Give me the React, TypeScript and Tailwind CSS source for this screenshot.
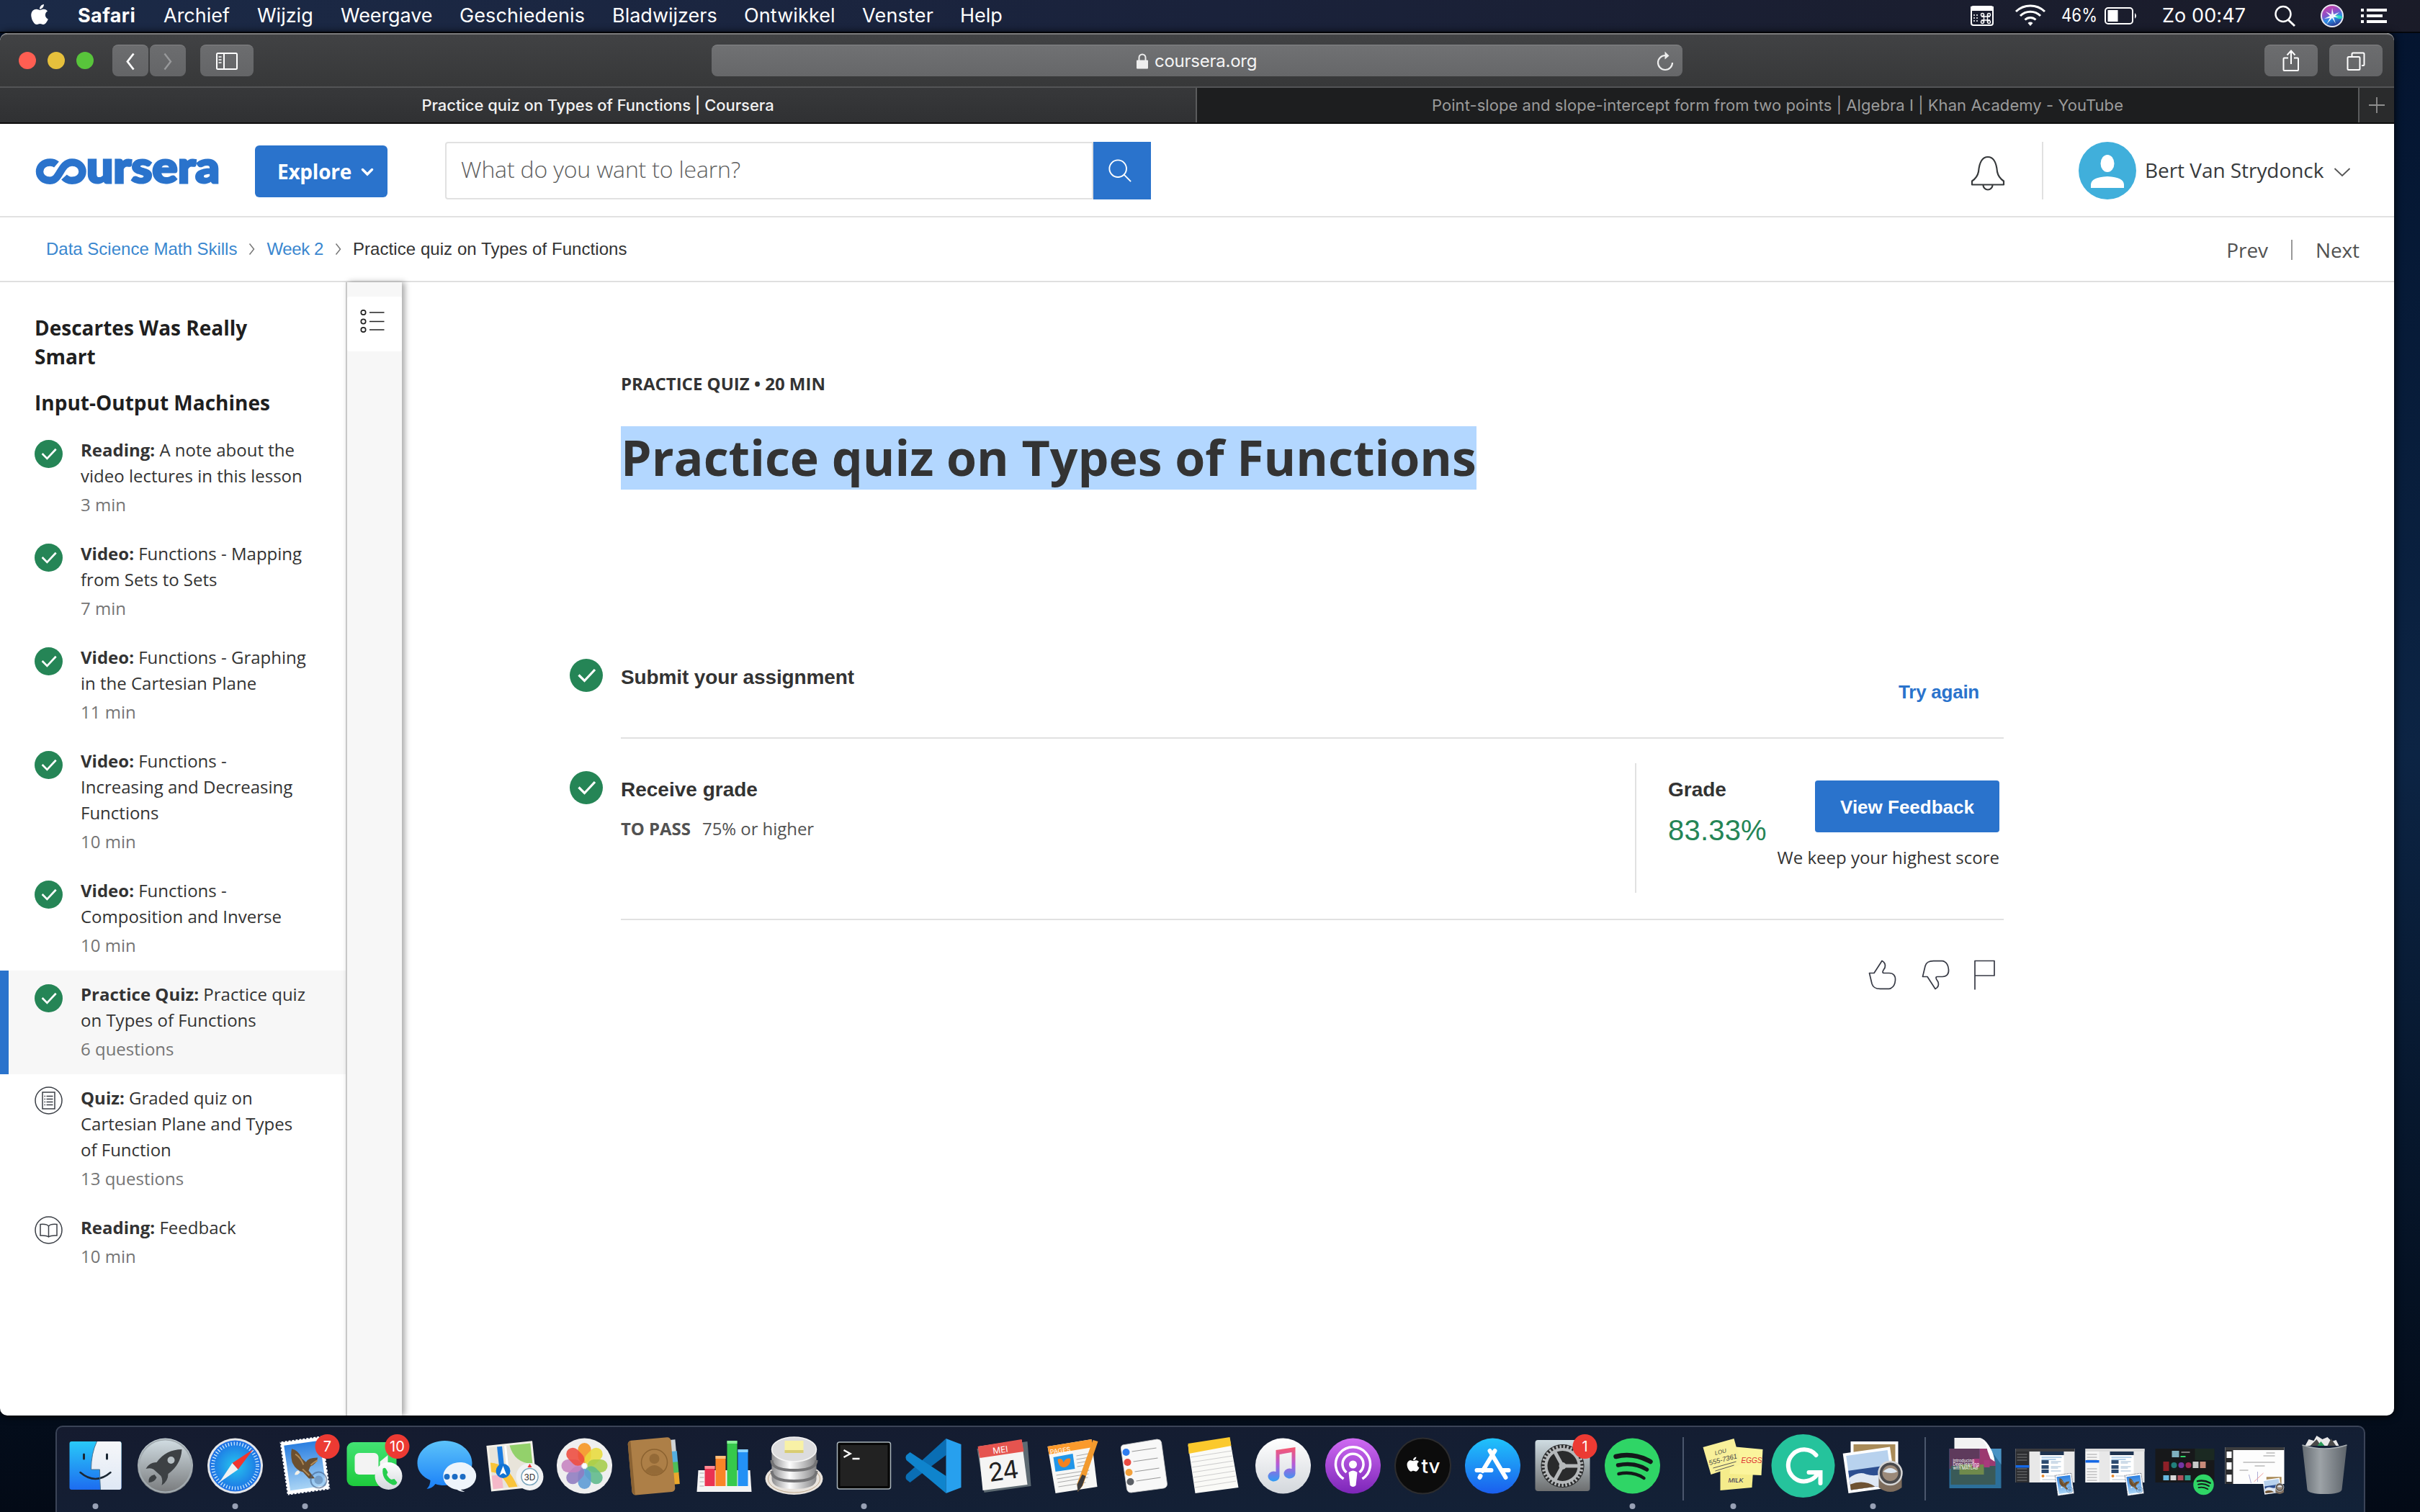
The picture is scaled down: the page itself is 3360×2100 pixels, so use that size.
import { type ReactNode } from "react";
import { FaApple } from "react-icons/fa";

const sans = "font-['Open_Sans',sans-serif]";
const inter = "font-['Inter',sans-serif]";
const helv = "font-['Liberation_Sans',sans-serif]";

const menus: [string, string][] = [
  ["Safari", "w-[119px] font-bold tracking-[0.4px]"],
  ["Archief", "w-[130px]"],
  ["Wijzig", "w-[116px]"],
  ["Weergave", "w-[165px] tracking-[-0.1px]"],
  ["Geschiedenis", "w-[212px] tracking-[0.1px]"],
  ["Bladwijzers", "w-[183px]"],
  ["Ontwikkel", "w-[164px] tracking-[0.1px]"],
  ["Venster", "w-[136px] tracking-[0.2px]"],
  ["Help", "w-[80px]"],
];

function MenuBar() {
  return (
    <div className={`flex h-[46px] w-full items-center border-b-2 border-[#03060c] bg-linear-to-r from-[#1b2a47] via-[#1a223b] to-[#1a1b28] text-[27px] leading-[44px] whitespace-nowrap text-white ${inter}`}>
      <FaApple className="mr-[37px] mb-1 ml-[39px] size-[32px]" />
      {menus.map(([label, cls]) => (
        <div key={label} className={cls}>{label}</div>
      ))}
      <div className="flex-1" />
      <svg className="h-[44px] w-[240px]" viewBox="0 0 240 44">
        <g fill="none" stroke="#fff" strokeWidth="2">
          <rect x="6" y="9" width="30" height="26" rx="3" />
          <path d="M6 10h30v4H6z" fill="#fff" />
          <path d="M9 21h6M9 25h6M9 29h6" strokeDasharray="2 2" strokeWidth="1.600" />
          <path d="M23.500 20v11M28.500 20v11M20 23h12M20 28h12" strokeWidth="1.400" />
          <circle cx="21.500" cy="20.500" r="2" strokeWidth="1.400" /><circle cx="30.500" cy="20.500" r="2" strokeWidth="1.400" />
          <circle cx="21.500" cy="30.500" r="2" strokeWidth="1.400" /><circle cx="30.500" cy="30.500" r="2" strokeWidth="1.400" />
        </g>
        <g fill="none" stroke="#fff" strokeWidth="3">
          <path d="M68 16a29 29 0 0 1 40 0" /><path d="M74 22a20 20 0 0 1 28 0" /><path d="M80.500 27.500a11 11 0 0 1 15 0" />
        </g>
        <path d="M84.500 32a5 5 0 0 1 7 0l-3.500 4z" fill="#fff" />
        <text x="131" y="30" fontSize="25" fill="#fff" textLength="50" lengthAdjust="spacingAndGlyphs">46%</text>
        <rect x="192" y="11" width="38" height="22" rx="4" fill="none" stroke="#fff" strokeWidth="2" />
        <rect x="195.500" y="14" width="14" height="16" fill="#fff" />
        <path d="M233 18q4 4 0 8z" fill="#fff" />
      </svg>
      <div className="ml-[31px] w-[154px] tracking-[0.1px]">Zo 00:47</div>
      <svg className="mr-[44px] h-[44px] w-[160px]" viewBox="3156 0 160 44">
        <circle cx="3170" cy="19.500" r="10.500" fill="none" stroke="#fff" strokeWidth="2.400" />
        <path d="M3177 27.500l9 8.500" stroke="#fff" strokeWidth="3" />
        <defs>
          <linearGradient id="siri" x1="0.200" y1="0" x2="0.600" y2="1"><stop offset="0" stopColor="#d83fa4" /><stop offset="0.400" stopColor="#8a4fc8" /><stop offset="0.650" stopColor="#2a8fe8" /><stop offset="1" stopColor="#27308a" /></linearGradient>
        </defs>
        <circle cx="3238" cy="22" r="15" fill="url(#siri)" stroke="#e9e9f2" strokeWidth="2" />
        <path d="M3240 21q8-1 13 3q-4 5-12-1z" fill="#2ee6c0" opacity=".85" />
        <path d="M3238 11l2 9l8-3l-6 5l5 2l-7 0l3 9l-5-8l-8 9l5-9l-8 1l8-4l-6-6l8 4z" fill="#fff" opacity=".92" />
        <path d="M3278 12h4v4h-4zM3278 20h4v4h-4zM3278 28h4v4h-4zM3286 12h28v4h-28zM3286 20h22v4h-22zM3286 28h28v4h-28z" fill="#fff" />
      </svg>
    </div>
  );
}

const btn = "flex h-[44px] items-center justify-center rounded-[8px] border-t border-[#838385] bg-linear-to-b from-[#6c6d6f] to-[#646567]";

function Toolbar() {
  return (
    <div className="flex h-[76px] items-center rounded-t-[10px] border-t-2 border-b-2 border-t-[#7b7b7c] border-b-[#535456] bg-linear-to-b from-[#414244] to-[#373839]">
      <div className="ml-[26px] flex gap-4">
        <span className="size-[24px] rounded-full bg-[#ff5e52]" />
        <span className="size-[24px] rounded-full bg-[#e6c03c]" />
        <span className="size-[24px] rounded-full bg-[#58c43b]" />
      </div>
      <div className={`ml-[26px] w-[50px] ${btn}`}>
        <svg className="size-[30px]" viewBox="0 0 30 30"><path d="M19.500 4.500L11 15.500L19.500 26.500" fill="none" stroke="#fff" strokeWidth="2.800" /></svg>
      </div>
      <div className={`ml-[2px] w-[50px] ${btn}`}>
        <svg className="size-[30px]" viewBox="0 0 30 30"><path d="M10.500 4.500L19 15.500L10.500 26.500" fill="none" stroke="#98999b" strokeWidth="2.400" /></svg>
      </div>
      <div className={`ml-[20px] w-[74px] ${btn}`}>
        <svg className="h-[26px] w-[32px]" viewBox="0 0 32 26"><g fill="none" stroke="#fff" strokeWidth="2"><rect x="2" y="2" width="28" height="22" rx="1.500" /><path d="M12 2v22" /><path d="M4.500 7h4M4.500 11h4M4.500 15h4" strokeWidth="1.600" /></g></svg>
      </div>
      <div className="ml-[636px] flex h-[44px] w-[1348px] items-center rounded-[8px] border-t border-[#868789] bg-linear-to-b from-[#707173] to-[#666769]">
        <svg className="ml-[590px] h-[22px] w-[17px]" viewBox="0 0 17 22"><rect x="0" y="9.500" width="16" height="12" rx="1" fill="#eee" /><path d="M3.500 10V6a4.500 4.500 0 0 1 9 0v4" fill="none" stroke="#eee" strokeWidth="2" /></svg>
        <div className={`ml-[8px] w-[696px] text-[24px] leading-[40px] tracking-[-0.25px] text-[#f4f4f4] ${inter}`}>coursera.org</div>
        <svg className="h-[30px] w-[26px]" viewBox="0 0 26 30"><path d="M13 7a10 10 0 1 0 10 10" fill="none" stroke="#eee" strokeWidth="2.200" /><path d="M12.500 1.500l6 6l-6 5z" fill="#eee" /></svg>
      </div>
      <div className={`ml-[808px] w-[74px] ${btn}`}>
        <svg className="h-[34px] w-[26px]" viewBox="0 0 26 34"><g fill="none" stroke="#fff" strokeWidth="2"><path d="M9 12.500H3.500q-1 0-1 1V29q0 1 1 1H22q1 0 1-1V13.500q0-1-1-1H17" /><path d="M13 21V3M7.500 8.500L13 2.500l5.500 6" /></g></svg>
      </div>
      <div className={`ml-[16px] w-[74px] ${btn}`}>
        <svg className="h-[28px] w-[26px]" viewBox="0 0 26 28"><g fill="none" stroke="#fff" strokeWidth="2"><rect x="1.500" y="8" width="17" height="18" rx="1.500" /><path d="M7.500 7V4q0-1.500 1.500-1.500H23q1.500 0 1.500 1.500V18.500q0 1.500-1.500 1.500h-2" /></g></svg>
      </div>
    </div>
  );
}

function TabBar() {
  return (
    <div className={`flex h-[50px] border-b-2 border-[#0c0c0c] text-[22px] leading-[48px] whitespace-nowrap ${inter}`}>
      <div className="flex w-[1662px] justify-center border-r-2 border-[#5a5b5c] bg-linear-to-b from-[#37383a] to-[#303133] font-medium tracking-[-0.05px] text-[#f2f2f2]">Practice quiz on Types of Functions | Coursera</div>
      <div className="flex w-[1614px] justify-center border-r-2 border-[#5a5b5c] bg-[#1d1e1f] tracking-[0.06px] text-[#9b9b9b]">Point-slope and slope-intercept form from two points | Algebra I | Khan Academy - YouTube</div>
      <div className="flex w-[48px] items-center justify-center bg-[#2a2b2c]">
        <svg className="size-[24px]" viewBox="0 0 24 24"><path d="M12 1v22M1 12h22" stroke="#8f8f8f" strokeWidth="1.800" /></svg>
      </div>
    </div>
  );
}

function Logo() {
  return (
    <svg aria-label="coursera" className="mt-[2px] ml-[46px] h-[100px] w-[262px]" viewBox="46 186 262 100">
      <path d="M78.500 227.500Q75 224.500 69.500 224.500C61 224.500 55 230 55 237.300S61 249.800 69.500 249.800C84 249.800 83.500 224.500 100 224.500C108.500 224.500 114.500 230 114.500 237.300S108.500 249.800 100 249.800Q93.500 249.800 89 245" fill="none" stroke="#2a73cc" strokeWidth="10.500" />
      <text x="120" y="252.500" textLength="185" lengthAdjust="spacingAndGlyphs" fontFamily="Lato" fontWeight="900" fontSize="60" fill="#2a73cc" stroke="#2a73cc" strokeWidth="3">ursera</text>
    </svg>
  );
}

function SiteHeader() {
  return (
    <div className="flex h-[130px] items-center border-b-2 border-[#e1e1e1]">
      <Logo />
      <div className={`mt-[4px] ml-[46px] flex h-[72px] w-[184px] items-center rounded-[6px] bg-[#2a73cc] pl-[31px] text-[28px] font-bold tracking-[-0.25px] text-white ${sans}`}>
        Explore
        <svg className="mt-[2px] ml-[13px] h-[12px] w-[18px]" viewBox="0 0 18 12"><path d="M2.500 2.500L9 9l6.500-6.500" fill="none" stroke="#fff" strokeWidth="3.400" strokeLinecap="round" /></svg>
      </div>
      <div className={`mt-[2px] ml-[80px] flex h-[80px] w-[900px] items-center rounded-l-[4px] border-2 border-[#e1e1e1] pb-[4px] pl-[20px] text-[32px] font-light tracking-[-0.17px] text-[#5e5e5e] ${sans}`}>
        What do you want to learn?
      </div>
      <div className="mt-[2px] flex h-[80px] w-[80px] items-center justify-center bg-[#2a73cc] pr-[6px]">
        <svg className="size-[34px]" viewBox="0 0 36 36"><circle cx="15" cy="15" r="12.500" fill="none" stroke="#fff" strokeWidth="2" /><path d="M24 24l10 10" stroke="#fff" strokeWidth="2" /></svg>
      </div>
      <svg className="mt-[10px] ml-[1138px] h-[52px] w-[48px]" viewBox="0 0 48 52">
        <g fill="none" stroke="#373a3c" strokeWidth="2.200"><path d="M2 41.500h44v-5c-6-4-8-8-9-13C36 12 32 3 24 3S12 12 11 23.500c-1 5-3 9-9 13z" strokeLinejoin="round" /><path d="M17.500 42a6.500 6.500 0 0 0 13 0" /></g>
      </svg>
      <div className="mt-[2px] ml-[51px] h-[80px] w-[2px] bg-[#e1e1e1]" />
      <svg className="mt-[2px] ml-[49px] size-[80px]" viewBox="0 0 80 80"><circle cx="40" cy="40" r="40" fill="#40afdb" /><ellipse cx="40" cy="30" rx="9.500" ry="12" fill="#fff" /><path d="M17 64v-4c0-7 6-11 23-12c17 1 23 5 23 12v4z" fill="#fff" /></svg>
      <div className={`ml-[12px] w-[262px] text-[28px] tracking-[-0.05px] text-[#373a3c] ${sans}`}>Bert Van Strydonck</div>
      <svg className="mt-[6px] h-[14px] w-[24px]" viewBox="0 0 24 14"><path d="M1.500 2L12 12L22.500 2" fill="none" stroke="#555" strokeWidth="1.800" /></svg>
    </div>
  );
}

function Sep() {
  return <svg className="mx-[16px] h-[18px] w-[9px] shrink-0" viewBox="0 0 9 18"><path d="M1.500 1.500L7.500 9L1.500 16.500" fill="none" stroke="#777" strokeWidth="1.500" /></svg>;
}

function Crumbs() {
  return (
    <div className={`flex h-[90px] items-center border-b-2 border-[#dfdfdf] pl-[64px] text-[24px] whitespace-nowrap text-[#3a87cf] ${helv}`}>
      <span>Data Science Math Skills</span>
      <Sep />
      <span className="tracking-[-0.4px]">Week 2</span>
      <Sep />
      <span className="tracking-[0.06px] text-[#333]">Practice quiz on Types of Functions</span>
      <div className={`ml-auto flex items-center pt-[2px] pr-[48px] text-[28px] tracking-[-0.1px] text-[#525252] ${sans}`}>
        <span>Prev</span>
        <span className="mx-[32px] h-[28px] w-[2px] bg-[#999]" />
        <span>Next</span>
      </div>
    </div>
  );
}

function Check({ className }: { className: string }) {
  return (
    <svg className={className} viewBox="0 0 46 46"><circle cx="23" cy="23" r="23" fill="#258556" /><path d="M12.500 22.500L20.500 30.500L35 15" fill="none" stroke="#fff" strokeWidth="3.200" /></svg>
  );
}

function QuizIcon() {
  return (
    <svg className="mt-[-2px] size-[39px]" viewBox="0 0 39 39"><g fill="none" stroke="#3b3f46" strokeWidth="1.500"><circle cx="19.500" cy="19.500" r="18.500" /><rect x="11" y="8" width="17" height="23" /><path d="M16.500 13.500h9M16.500 17.500h9M16.500 21.500h9M16.500 25.500h9M13.500 13.500h1.500M13.500 17.500h1.500M13.500 21.500h1.500M13.500 25.500h1.500" /></g></svg>
  );
}

function BookIcon() {
  return (
    <svg className="mt-[-2px] size-[39px]" viewBox="0 0 39 39"><g fill="none" stroke="#3b3f46" strokeWidth="1.500"><circle cx="19.500" cy="19.500" r="18.500" /><path d="M19.500 14c-2-2.500-6-3-11.500-2.500v15.500c5-.300 9 0 11.500 2c2.500-2 6.500-2.300 11.500-2V11.500c-5.500-.500-9.500 0-11.500 2.500zv15" /></g></svg>
  );
}

const lessons: { kind: string; lines: string[]; meta: string; icon?: "quiz" | "book"; active?: boolean }[] = [
  { kind: "Reading:", lines: ["A note about the", "video lectures in this lesson"], meta: "3 min" },
  { kind: "Video:", lines: ["Functions - Mapping", "from Sets to Sets"], meta: "7 min" },
  { kind: "Video:", lines: ["Functions - Graphing", "in the Cartesian Plane"], meta: "11 min" },
  { kind: "Video:", lines: ["Functions -", "Increasing and Decreasing", "Functions"], meta: "10 min" },
  { kind: "Video:", lines: ["Functions -", "Composition and Inverse"], meta: "10 min" },
  { kind: "Practice Quiz:", lines: ["Practice quiz", "on Types of Functions"], meta: "6 questions", active: true },
  { kind: "Quiz:", lines: ["Graded quiz on", "Cartesian Plane and Types", "of Function"], meta: "13 questions", icon: "quiz" },
  { kind: "Reading:", lines: ["Feedback"], meta: "10 min", icon: "book" },
];

function Sidebar() {
  return (
    <div className={`w-[480px] ${sans}`}>
      <h2 className="mt-[43px] ml-[48px] text-[28px] leading-[40px] font-bold text-[#1f1f1f]">Descartes Was Really<br />Smart</h2>
      <h2 className="mt-[24px] mb-[13px] ml-[48px] text-[28px] leading-[40px] font-bold text-[#1f1f1f]">Input-Output Machines</h2>
      {lessons.map((l, i) => (
        <div key={i} className={`flex border-l-12 pt-[15px] pb-[17px] pl-[36px] text-[24px] leading-[36px] text-[#333] ${l.active ? "border-[#2a73cc] bg-[#f7f7f7]" : "border-transparent"}`}>
          <div className="w-[64px] shrink-0 pt-[4px]">
            {l.icon === "quiz" ? <QuizIcon /> : l.icon === "book" ? <BookIcon /> : <Check className="size-[39px]" />}
          </div>
          <div className="whitespace-nowrap">
            <div><b>{l.kind}</b> {l.lines[0]}</div>
            {l.lines.slice(1).map((x) => <div key={x}>{x}</div>)}
            <div className="mt-[4px] text-[#757575]">{l.meta}</div>
          </div>
        </div>
      ))}
    </div>
  );
}

function Rail() {
  return (
    <div className="w-[78px] border-l-2 border-[#c8c8c8] bg-[#f7f7f7] pt-[20px] shadow-[4px_0_8px_rgba(0,0,0,0.35)]">
      <div className="flex h-[76px] w-[76px] items-center rounded-[3px] bg-white pl-[18px]">
        <svg className="mb-[8px] h-[32px] w-[34px]" viewBox="0 0 34 32"><g fill="none" stroke="#222" strokeWidth="1.700"><circle cx="4.500" cy="4" r="3.200" /><circle cx="4.500" cy="16.500" r="3.200" /><circle cx="4.500" cy="28" r="3.200" /><path d="M13 4h20.500M13 16.500h20.500M13 28h20.500" /></g></svg>
      </div>
    </div>
  );
}

function Content() {
  return (
    <div className="flex-1 pl-[233px] whitespace-nowrap text-[#333]">
      <div className={`mt-[123px] pl-[71px] text-[24px] leading-[36px] font-bold ${sans}`}>PRACTICE QUIZ • 20 MIN</div>
      <h1 className={`mt-[41px] ml-[71px] h-[88px] w-[1188px] bg-[#b3d7ff] text-[68px] leading-[86px] font-bold ${sans}`}>Practice quiz on Types of Functions</h1>
      <div className={`mt-[235px] flex h-[111px] ${helv}`}>
        <Check className="size-[46px]" />
        <div className="ml-[25px] flex flex-1 justify-between border-b-2 border-[#e1e1e1]">
          <div className="pt-[8px] text-[28px] leading-[36px] font-bold tracking-[-0.13px]">Submit your assignment</div>
          <div className="mr-[34px] pt-[28px] text-[26px] leading-[36px] font-bold tracking-[-0.25px] text-[#2a73cc]">Try again</div>
        </div>
        <div className="w-[542px]" />
      </div>
      <div className="flex h-[252px]">
        <Check className="mt-[45px] size-[46px]" />
        <div className="ml-[25px] flex flex-1 border-b-2 border-[#e1e1e1]">
          <div className="w-[1408px]">
            <div className={`mt-[53px] text-[28px] leading-[36px] font-bold ${helv}`}>Receive grade</div>
            <div className={`mt-[18px] flex gap-[16px] text-[24px] leading-[36px] tracking-[-0.05px] text-[#525252] ${sans}`}><b>TO PASS</b><span>75% or higher</span></div>
          </div>
          <div className="mt-[34px] h-[180px] w-[2px] bg-[#e1e1e1]" />
          <div className={`mt-[53px] ml-[44px] w-[120px] ${helv}`}>
            <div className="text-[28px] leading-[36px] font-bold">Grade</div>
            <div className="mt-[16px] text-[40px] leading-[44px] tracking-[0.2px] text-[#258556]">83.33%</div>
          </div>
          <div className="mr-[6px] ml-auto flex flex-col items-end pt-[58px]">
            <div className={`flex h-[72px] w-[256px] items-center justify-center rounded-[4px] bg-[#2a73cc] pt-[2px] text-[26px] font-bold text-white ${helv}`}>View Feedback</div>
            <div className={`mt-[17px] text-[24px] leading-[36px] ${sans}`}>We keep your highest score</div>
          </div>
        </div>
        <div className="w-[542px]" />
      </div>
      <svg className="mt-[52px] ml-[1798px] h-[48px] w-[190px]" viewBox="2590 1330 190 48">
        <g fill="none" stroke="#373a45" strokeWidth="1.700" strokeLinejoin="round">
          <path d="M2596.500 1351.500h6.500l11-17c4 2 5 6 4 9.500c-1 2-3 4-3 6q0 1.500 2 1.500h7c6 0 9 4 8.500 10c-.500 6-3 9.500-6 11q-1 .800-3 .800h-12c-7 0-10-2-11.500-7z" />
          <path d="M2670.500 1356.500h6.500l11 17c4-2 5-6 4-9.500c-1-2-3-4-3-6q0-1.500 2-1.500h7c6 0 9-4 8.500-10c-.500-6-3-9.500-6-11q-1-.800-3-.800h-12c-7 0-10 2-11.500 7z" />
          <path d="M2743 1374.500v-40h27v20.500h-27" />
        </g>
      </svg>
    </div>
  );
}

function Icon({ children, dot }: { children: ReactNode; dot?: boolean }) {
  return (
    <svg className="h-[118px] w-[97px] shrink-0 overflow-visible" viewBox="-48.5 -54 97 118">
      {children}
      {dot && <circle cx="0" cy="56" r="4" fill="#98a1b5" />}
    </svg>
  );
}

function Badge({ n, x }: { n: string; x: number }) {
  return <g><circle cx={x} cy="-27" r="17" fill="#ec3a33" /><text x={x} y="-20" fontSize="20" textAnchor="middle" fill="#fff">{n}</text></g>;
}

function MailStamp() {
  return (
    <g transform="rotate(-8)">
      <rect x="-30" y="-38" width="60" height="75" fill="#fff" />
      <rect x="-30" y="-38" width="60" height="75" fill="none" stroke="#15203a" strokeWidth="2.500" strokeDasharray="2 3" />
      <rect x="-25" y="-32" width="50" height="63" fill="url(#stamp)" />
      <path d="M-15-26q9 3 12 15l5 6q4-6 17-4q-2 8-12 11l-3 5l7 12l-8-1l-7-10q-10-4-13-16q-1-10 2-18z" fill="#6b4f30" />
      <path d="M-11-18q7 6 9 16M8 0q6-4 10-5M-4 4l8 10" stroke="#b08a55" strokeWidth="2" fill="none" />
      <path d="M-8 8q-4 4-8 2q2-5 6-5z" fill="#f4f0e6" />
      <circle cx="16" cy="22" r="11" fill="none" stroke="#42608a" strokeWidth="2" opacity=".6" /><circle cx="16" cy="22" r="6" fill="#42608a" opacity=".4" />
    </g>
  );
}

function SpotifyMark() {
  return (
    <g>
      <circle r="38.500" fill="#2fd566" />
      <g fill="none" stroke="#14181a" strokeLinecap="round"><path d="M-23-13q24-6 48 7" strokeWidth="6.500" /><path d="M-20-1q22-5 40 6" strokeWidth="5.500" /><path d="M-19 11q20-4 35 6" strokeWidth="4.500" /></g>
    </g>
  );
}

function PreviewPhoto() {
  return (
    <g>
      <g transform="translate(2 -14)"><rect x="-33" y="-20" width="66" height="50" fill="#fff" /><rect x="-29" y="-16" width="58" height="44" fill="#a98b58" /></g>
      <g transform="rotate(-8) translate(-6 4)">
        <rect x="-33" y="-27" width="66" height="56" fill="#fff" />
        <rect x="-29" y="-23" width="58" height="48" fill="#b8d2ee" />
        <path d="M-29-2h58v27h-58z" fill="#2d4f90" /><path d="M-29 8q14-8 24-2q16 8 34-2v21h-58z" fill="#dfe8f4" /><path d="M-29 17q20-5 34 8h-34z" fill="#6d5233" />
      </g>
      <path d="M8 12h32v18q-16 12-32 0z" fill="#7d6c5c" />
      <circle cx="24" cy="10" r="16" fill="#4a4a4c" stroke="#d6d6d6" strokeWidth="2.500" /><circle cx="24" cy="10" r="11" fill="#9b8a7a" /><path d="M14 8q10-10 20 0q-8 4-20 0z" fill="#dbe6f0" />
    </g>
  );
}

function MailThumb({ dark }: { dark: boolean }) {
  const side = dark ? "#2c2d30" : "#f6f6f6";
  return (
    <g>
      <rect x="-41" y="-24" width="82" height="47" fill="#e8e8e8" />
      <rect x="-41" y="-24" width="82" height="4" fill={dark ? "#3a3b3e" : "#dcdcdc"} />
      <rect x="-41" y="-20" width="19" height="43" fill={side} />
      <path d="M-39-16h14M-39-12h14M-39-8h14M-39 4h14M-39 8h14M-39 12h14M-39 16h14M-39 20h14" stroke="#8f8f92" strokeWidth=".8" />
      <rect x="-41" y={dark ? -1 : -8} width="19" height="3.500" fill="#1568e6" />
      <rect x="-7" y="-20" width="33" height="42" fill="#fff" /><rect x="-7" y="-20" width="33" height="5" fill="#1e3350" />
      <path d="M-5-12h28M-5-9h20" stroke="#6ea7d8" strokeWidth="1" />
      <path d="M-5-8h10v5h-10zM-5-1h10v5h-10zM-5 5h10v5h-10z" fill="#2d4b70" /><path d="M8-6h14M8-4h10M8 1h14M8 3h10M8 7h14" stroke="#9cb8d2" strokeWidth="1" />
      <circle cx="-3" cy="14" r="2" fill="#e88a2c" /><path d="M1 14h20M-4 19h26" stroke="#b8c4d0" strokeWidth="1" />
      <g transform="translate(27 26) scale(.38)"><MailStamp /></g>
    </g>
  );
}

const petals = ["#f7941e", "#e8dc3c", "#a5cd4a", "#5fb98b", "#5b9bd5", "#8f7cc0", "#c683c0", "#ee4b3e"];

function Dock() {
  return (
    <div className={`mt-[14px] ml-[77px] flex h-[120px] w-[3207px] rounded-t-[10px] border-2 border-b-0 border-[#3b4457] bg-linear-to-br from-[#151b2f] to-[#122238] pl-[5px] ${inter}`}>
      <svg className="absolute size-0">
        <defs>
          <linearGradient id="finder" x2="0" y2="1"><stop stopColor="#29c9f8" /><stop offset="1" stopColor="#1d6cf0" /></linearGradient>
          <linearGradient id="finder2" x2="0" y2="1"><stop stopColor="#f6f7f9" /><stop offset="1" stopColor="#dfe8f5" /></linearGradient>
          <linearGradient id="rocket" x2="0" y2="1"><stop stopColor="#d3dfe5" /><stop offset="1" stopColor="#77797b" /></linearGradient>
          <radialGradient id="safari"><stop stopColor="#26c6ee" /><stop offset="1" stopColor="#1d6fe4" /></radialGradient>
          <linearGradient id="stamp" x2="0" y2="1"><stop stopColor="#2b7fe0" /><stop offset="1" stopColor="#a9d4f5" /></linearGradient>
          <linearGradient id="green" x2="0" y2="1"><stop stopColor="#42e273" /><stop offset="1" stopColor="#1ecb3d" /></linearGradient>
          <linearGradient id="msg" x2="0" y2="1"><stop stopColor="#5cc3fa" /><stop offset="1" stopColor="#1a80f8" /></linearGradient>
          <linearGradient id="silver" x2="0" y2="1"><stop stopColor="#fff" /><stop offset="1" stopColor="#d3d7dc" /></linearGradient>
          <linearGradient id="metal"><stop stopColor="#8d8d8f" /><stop offset=".4" stopColor="#fdfdfd" /><stop offset="1" stopColor="#858587" /></linearGradient>
          <linearGradient id="note" x2="0" y2="1"><stop stopColor="#f9586d" /><stop offset=".5" stopColor="#b55bd8" /><stop offset="1" stopColor="#2f9df4" /></linearGradient>
          <linearGradient id="pod" x2="0" y2="1"><stop stopColor="#cf6bf2" /><stop offset="1" stopColor="#7c25b8" /></linearGradient>
          <linearGradient id="store" x2="0" y2="1"><stop stopColor="#20c3fb" /><stop offset="1" stopColor="#1a5eee" /></linearGradient>
          <linearGradient id="gear" x2="0" y2="1"><stop stopColor="#cfdce2" /><stop offset="1" stopColor="#6d6f70" /></linearGradient>
          <linearGradient id="trash"><stop stopColor="#6c7378" /><stop offset=".4" stopColor="#a9aeb1" /><stop offset="1" stopColor="#646a6f" /></linearGradient>
        </defs>
      </svg>
      <Icon dot>
        <rect x="-36" y="-34" width="72" height="67" rx="3" fill="url(#finder)" />
        <path d="M2-34h31q3 0 3 3V30q0 3-3 3H7q-1-14-1-28h-12q0-22 8-39z" fill="url(#finder2)" />
        <path d="M-16-16v6M16-16v6" stroke="#1b2733" strokeWidth="3" strokeLinecap="round" /><path d="M-21 9q21 18 42 0" fill="none" stroke="#1b2733" strokeWidth="2.500" strokeLinecap="round" /><path d="M2-34q-8 17-8 39H6q0 14 1 28" fill="none" stroke="#4a7390" strokeWidth="1" />
      </Icon>
      <Icon>
        <circle r="38.500" fill="url(#rocket)" /><circle r="36.500" fill="none" stroke="#a2abb0" strokeWidth="2" />
        <path d="M23-23q-22 0-35 18q-10 0-15 9q7-2 11 1l10 9q3 5 1 13q9-6 9-16q18-13 19-34z" fill="#3d4144" /><circle cx="8" cy="-8" r="5" fill="#b6bfc3" /><path d="M-15 12q-9 2-8 11q8 0 11-7z" fill="#3d4144" />
      </Icon>
      <Icon dot>
        <circle r="38.500" fill="#e3e5e8" /><circle r="35.500" fill="url(#safari)" /><circle r="31" fill="none" stroke="#d9f1ff" strokeWidth="5" strokeDasharray="1.200 2.800" />
        <path d="M25-23L4 5L-4-4z" fill="#f0352f" /><path d="M-22 23L-4-4L4 5z" fill="#f2f2f2" />
      </Icon>
      <Icon dot><MailStamp /><Badge n="7" x={31} /></Icon>
      <Icon>
        <rect x="-39" y="-33" width="69" height="61" rx="9" fill="url(#green)" /><rect x="-28" y="-18" width="33" height="30" rx="6" fill="#f3f3f3" /><path d="M7-6l11-9V8l-11-2z" fill="#f3f3f3" />
        <circle cx="19" cy="14" r="19" fill="url(#silver)" /><path d="M11 4q3-3 5 1l2 4q-2 3-1 4q3 5 6 6l4-1l4 5q-2 5-7 3q-15-7-13-22z" fill="#26cf4d" /><Badge n="10" x={31} />
      </Icon>
      <Icon>
        <path d="M0-35c21 0 38 14 38 31S21 27 0 27q-8 0-13-2q-4 6-12 7q5-5 5-12q-18-8-18-24c0-17 17-31 38-31z" fill="url(#msg)" />
        <path d="M14-4a22.500 19 0 1 1 8 37q4 2 6 3q-7 0-11-3A22.500 19 0 0 1 14-4z" fill="#eef4fb" /><g fill="#1c6cc4"><circle cx="3" cy="15" r="4" /><circle cx="14" cy="15" r="4" /><circle cx="25" cy="15" r="4" /></g>
      </Icon>
      <Icon>
        <g transform="rotate(-6)"><rect x="-36" y="-32" width="64" height="64" fill="#f4f1ea" /><rect x="-33" y="-29" width="58" height="58" fill="#e8e4da" /><path d="M-4-29h29V0Q0-4-4-29z" fill="#93d16b" /><path d="M-33-8q24 4 34 37h-12q-8-22-22-24z" fill="#f9c43a" /><path d="M-33 10h14v19h-14z" fill="#f5b8c8" /><path d="M-18-29v30" stroke="#1c7ce0" strokeWidth="7" /><path d="M-10-29V0" stroke="#fff" strokeWidth="3" /></g>
        <circle cx="-16" cy="7" r="10" fill="#1173d4" /><path d="M-16 0l5 13l-5-3l-5 3z" fill="#fff" />
        <circle cx="21" cy="15" r="19" fill="#f1f2f3" /><circle cx="21" cy="15" r="11.500" fill="#fff" stroke="#7aa6bd" strokeWidth="1.500" /><path d="M21-3l3 5h-6z" fill="#e33" /><text x="21" y="20" fontSize="12" textAnchor="middle" fill="#333">3D</text>
      </Icon>
      <Icon>
        <circle r="38.500" fill="#efefef" />
        {petals.map((c, i) => <rect key={c} x="-9" y="-32" width="18" height="28" rx="9" fill={c} opacity=".88" transform={`rotate(${i * 45})`} />)}
        <circle r="3" fill="#fff" />
      </Icon>
      <Icon>
        <g transform="rotate(-5)"><path d="M24-34h8v18h-8z" fill="#cfd3d6" /><path d="M24-18h9V-2h-9z" fill="#55aee0" /><path d="M24-3h9v16h-9z" fill="#4fbf58" /><path d="M24 12h9v16h-9z" fill="#eba82c" /><rect x="-34" y="-38" width="60" height="76" rx="5" fill="#ad7f47" /><path d="M-34-34v68l4 4v-76z" fill="#8a6233" /></g>
        <circle cy="-5" r="18" fill="none" stroke="#8b6230" strokeWidth="1.500" /><circle cy="-10" r="7" fill="#946a37" /><path d="M-13 7q13-16 26 0q-13 10-26 0z" fill="#946a37" />
      </Icon>
      <Icon>
        <path d="M-36 6h72l2 30h-76z" fill="#f4f4f4" /><g stroke="#aaa"><path d="M-34 10h6M-34 16h6M-34 22h6M-34 28h6" /></g>
        <rect x="-27" width="14" height="28" fill="#ea3352" /><rect x="-12" y="-14" width="14" height="42" fill="#f98527" /><rect x="4" y="-35" width="14" height="63" fill="#36c94c" /><rect x="19" y="-23" width="14" height="51" fill="#2391f5" />
        <path d="M-27 0h14v4h-14z" fill="#ff8b94" /><path d="M-12-14h14v4h-14z" fill="#ffbe7a" /><path d="M4-35h14v4H4z" fill="#8cf09a" /><path d="M19-23h14v4h-14z" fill="#8cd4ff" />
      </Icon>
      <Icon>
        <ellipse cy="18" rx="40" ry="22" fill="#e9e4de" /><ellipse cy="18" rx="36" ry="19" fill="none" stroke="#bfa98d" />
        <path d="M-31-22v40q0 14 31 14t31-14v-40z" fill="url(#metal)" /><path d="M-31-8q0 14 31 14T31-8M-31 7q0 14 31 14T31 7" fill="none" stroke="#737375" strokeWidth="4" />
        <ellipse cy="-23" rx="31" ry="17" fill="#dcdcde" stroke="#f5f5f5" strokeWidth="1.500" /><path d="M-13-35h26v15h-26z" fill="#f8f1a6" /><path d="M-13-22h26v4h-26z" fill="#d9cd73" />
      </Icon>
      <Icon dot>
        <rect x="-37" y="-33" width="74" height="65" rx="3" fill="#070707" stroke="#a9b4ba" strokeWidth="1.500" /><rect x="-33" y="-29" width="66" height="57" fill="#222" />
        <path d="M-28-22l9 5l-9 5M-16-10h10" fill="none" stroke="#fff" strokeWidth="2.500" />
      </Icon>
      <Icon>
        <path d="M17-38L-38 12q-2 4 0 7l5 4l50-38z" fill="#0a6eb4" /><path d="M-33-19l-5 4q-2 3 0 7L17 38v-24z" fill="#0f84cd" /><path d="M17-38l21 8v60l-21 8z" fill="#27a0ee" />
      </Icon>
      <Icon>
        <path d="M-37-24l70-10l5 62l-65 9z" fill="#5d6a72" /><path d="M-35-27l60-9l8 62l-62 8z" fill="#f5f5f4" /><path d="M-36-27l61-10l3 17l-61 9z" fill="#e5544f" />
        <text transform="translate(-4 -18) rotate(-8)" fontSize="12" textAnchor="middle" fill="#fff">MEI</text><text transform="translate(1 19) rotate(-8)" fontSize="35" textAnchor="middle" fill="#222" letterSpacing="-1">24</text>
      </Icon>
      <Icon>
        <path d="M-36-27l61-10l8 66l-58 9z" fill="#f7f7f5" /><path d="M-36-27l61-10l2 11l-61 10z" fill="#fb9a2c" /><text transform="translate(-18 -18) rotate(-8)" fontSize="9" textAnchor="middle" fill="#fff">PAGES</text>
        <path d="M-28-12l27-5l3 21l-27 4z" fill="#2196e8" /><path d="M-22-9q6-3 8 4q4-7 10-5q0 10-9 12q-8 0-9-11z" fill="#f58220" /><path d="M4-14l17-3M4-9l18-3M5-4l17-3M5 1l17-3M-24 13l46-7M-23 18l44-7M-22 23l42-7M-21 29l38-6" stroke="#aaa" strokeWidth="1" />
        <path d="M27-36l7 2L13 27L6 36L5 25z" fill="#f29a2e" /><path d="M12 12l5 2L12 28L6 36l-1-10z" fill="#3c3c3e" />
      </Icon>
      <Icon>
        <path d="M-29-29l48-8q5 0 6 4l8 58q0 5-5 6l-45 6q-5 0-6-5l-8-55q-1-4 2-6z" fill="#f8f8f8" stroke="#c9c9c9" strokeWidth=".8" /><g strokeWidth="1.200" stroke="#999"><path d="M-16-20l34-5M-14-6l34-5M-12 8l34-5M-10 21l34-5" /></g>
        <circle cx="-24" cy="-19" r="5" fill="#2f7df0" /><circle cx="-22" cy="-5" r="5" fill="#ea4a41" /><circle cx="-20" cy="9" r="5" fill="#f3a03a" /><circle cx="-18" cy="22" r="5" fill="#5b5f65" />
      </Icon>
      <Icon>
        <path d="M-35-29l58-9l12 68l-60 8z" fill="#fafaf7" /><path d="M-35-31l58-9l2 12l-59 11z" fill="#fbc92c" /><path d="M-32-12l58-9M-31-5l58-9M-30 2l58-9M-29 9l58-9M-28 16l58-9M-27 23l58-9M-26 30l58-9" stroke="#cfcfcf" strokeWidth="1.200" />
      </Icon>
      <Icon>
        <circle r="38.500" fill="url(#silver)" /><path d="M-10-22l27-4v37a8 7 0 1 1-5-7v-23l-17 3v31a8 7 0 1 1-5-7z" fill="url(#note)" />
      </Icon>
      <Icon>
        <circle r="38.500" fill="url(#pod)" /><g fill="none" stroke="#fff" strokeWidth="3.500"><path d="M-13 18a24 24 0 1 1 26 0" /><path d="M-9 9a14.500 14.500 0 1 1 18 0" /></g><circle cy="-2" r="5.500" fill="#fff" /><path d="M-6 9q6-5 12 0l-2 18q-4 4-8 0z" fill="#fff" />
      </Icon>
      <Icon>
        <circle r="38.500" fill="#0c0c0c" stroke="#2c2c2e" strokeWidth="2" /><g transform="translate(-25 -14) scale(1.050)"><FaApple x="0" y="0" width="22" height="22" size={22} color="#fff" /></g><text x="-2" y="10" fontSize="27" fontWeight="500" fill="#fff" textLength="26" lengthAdjust="spacingAndGlyphs">tv</text>
      </Icon>
      <Icon>
        <circle r="38.500" fill="url(#store)" /><g stroke="#fff" strokeWidth="6" strokeLinecap="round"><path d="M3-21L-14 7M-4-21L18 16M-22 6H-2M13 6h9M-17 14l-1 2" /></g>
      </Icon>
      <Icon>
        <rect x="-38" y="-36" width="76" height="71" rx="4" fill="url(#gear)" /><circle r="30" fill="#2a2b2c" /><circle r="26.500" fill="none" stroke="#b5b8ba" strokeWidth="5" strokeDasharray="2.500 2.500" /><circle r="23" fill="none" stroke="#b5b8ba" strokeWidth="4" /><path d="M0 0L-11-20M0 0h22M0 0L-11 20" stroke="#b5b8ba" strokeWidth="5" /><circle r="5" fill="#b5b8ba" /><Badge n="1" x={31} />
      </Icon>
      <Icon dot><SpotifyMark /></Icon>
      <div className="w-[43px] shrink-0 pt-[14px] pl-[21px]"><div className="h-[88px] w-[2px] bg-[#4a566c]" /></div>
      <Icon dot>
        <path d="M-18 0h46l-2 30l-44 4z" fill="#f5ec8b" /><path d="M-2-27l43 4l-2 36l-44-2z" fill="#fbf49c" /><path d="M-42-26l43-12l10 36l-42 14z" fill="#f8f09a" />
        <g fontFamily="Liberation Sans" fontStyle="italic"><text transform="translate(-25 -15) rotate(-14)" fontSize="8" fill="#444">LOU</text><text transform="translate(-33 -1) rotate(-14)" fontSize="9.500" fill="#444">555-7361</text><text transform="translate(11 -4)" fontSize="10" fill="#d33">EGGS</text><text x="-7" y="23" fontSize="9" fill="#225">MILK</text></g>
        <path d="M-28 3l32-9M-25 7l26-8" stroke="#555" />
      </Icon>
      <Icon>
        <circle r="44" fill="#25c39c" /><path d="M18-15a22 22 0 1 0 2 26M24 24v-15h-16" fill="none" stroke="#fff" strokeWidth="6" strokeLinecap="round" />
      </Icon>
      <Icon dot><PreviewPhoto /></Icon>
      <div className="w-[45px] shrink-0 pt-[14px] pl-[23px]"><div className="h-[88px] w-[2px] bg-[#4a566c]" /></div>
      <Icon>
        <path d="M-29-39h36q10 4 14 16v22h-50z" fill="#f2f2f2" /><rect x="-36" y="-24" width="72" height="55" fill="#2c6f9a" /><path d="M-36-24h42v28h-42z" fill="#5e3a5c" /><path d="M6-24h10l12 18V4H6z" fill="#9c3a70" /><path d="M-34 0h62v26h-62z" fill="#3a5a58" /><path d="M-22-2h34v14h-34z" fill="#6f8a4c" /><path d="M-4-10h10v12H-4zM12-8h8v10h-8z" fill="#a83a7c" /><path d="M20-24h16v22z" fill="#4a93c4" /><path d="M8-39q8 10 9 18l4 11l6 4q-2-20-19-33z" fill="#fff" />
        <g fontSize="5.500" fill="#fff"><text x="-31" y="-5">Introducing</text><text x="-31" y="0">Deep learning</text><text x="-31" y="5">with MATLAB</text></g>
      </Icon>
      <Icon><MailThumb dark /></Icon>
      <Icon><MailThumb dark={false} /></Icon>
      <Icon>
        <rect x="-41" y="-24" width="82" height="47" fill="#17181a" /><rect x="-18" y="-21" width="10" height="9" fill="#7fb0c0" /><path d="M-5-20h12v2h-12z" fill="#777" /><path d="M-6-14h7v2h-7z" fill="#2fd566" /><path d="M14-24h27v16h-27z" fill="#1f3a2a" opacity=".5" />
        <rect x="-30" y="-6" width="8" height="13" fill="#8f2028" /><rect x="-19" y="-6" width="8" height="13" fill="#151c1c" /><rect x="-9" y="-6" width="8" height="13" fill="#1a1420" /><rect x="1" y="-6" width="8" height="13" fill="#1c1216" /><circle cx="-15" cy="-1" r="4" fill="#22807c" /><circle cx="-5" cy="-1" r="4" fill="#7436a4" /><circle cx="5" cy="-1" r="4" fill="#a32a54" /><rect x="11" y="-6" width="8" height="9" fill="#c8c8c8" /><rect x="21" y="-6" width="8" height="9" fill="#c98a7a" /><rect x="-30" y="13" width="8" height="7" fill="#68b8e0" /><rect x="-20" y="13" width="8" height="7" fill="#d8d8d8" /><rect x="-10" y="13" width="8" height="7" fill="#b04f5a" /><rect x="0" y="13" width="8" height="7" fill="#2f9a8a" />
        <g transform="translate(26 26) scale(.370)"><SpotifyMark /></g>
      </Icon>
      <Icon>
        <rect x="-41" y="-26" width="82" height="51" fill="#fdfdfd" /><rect x="-41" y="-26" width="82" height="4" fill="#3b3c3e" /><rect x="-41" y="-22" width="11" height="47" fill="#2c2d2f" /><path d="M-39-20h7v9h-7zM-39-5h7v10h-7zM-39 12h7v10h-7z" fill="#fff" />
        <path d="M16-18h12M12-14h16M-16-5h44M0 0h14M-21 6h12" stroke="#999" strokeWidth="1" /><path d="M-8 12l3 12M4 8v14" stroke="#99c" strokeWidth=".8" /><path d="M-1 22L12 10" stroke="#e88" strokeWidth=".8" /><g transform="translate(26 26) scale(.360)"><PreviewPhoto /></g>
      </Icon>
      <Icon>
        <path d="M-27-28l5-9l7 2l4-7l8 5l7-3l6 6l6-2l4 8z" fill="#e9e9e9" /><path d="M-20-28l9-9l6 9zM4-28l5-10l7 10z" fill="#4a4a4a" /><path d="M-10-28l5-6l5 6z" fill="#2a9a58" /><path d="M-31-29q31 10 62 0l-7 62q-2 6-24 6t-24-6z" fill="url(#trash)" opacity=".92" /><path d="M-31-29q31 10 62 0" fill="none" stroke="#aab0b4" strokeWidth="1.500" />
      </Icon>
    </div>
  );
}

export default function App() {
  return (
    <div className="h-[2100px] w-[3360px] overflow-hidden bg-linear-to-b from-[#04142f] via-[#0c2444] to-[#030a16]">
      <MenuBar />
      <div className="flex h-[1920px] w-[3324px] flex-col overflow-hidden rounded-[10px] bg-white shadow-[0_0_12px_#000]">
        <Toolbar />
        <TabBar />
        <SiteHeader />
        <Crumbs />
        <div className="flex flex-1">
          <Sidebar />
          <Rail />
          <Content />
        </div>
      </div>
      <Dock />
    </div>
  );
}
